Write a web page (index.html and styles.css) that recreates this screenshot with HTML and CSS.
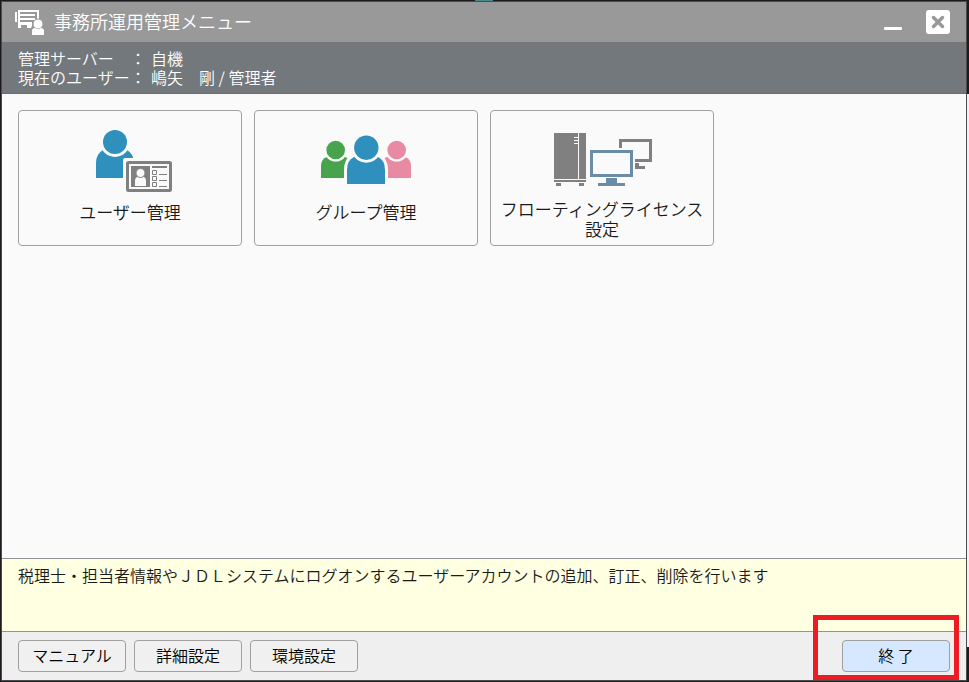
FILE: index.html
```html
<!DOCTYPE html>
<html lang="ja">
<head>
<meta charset="utf-8">
<title>事務所運用管理メニュー</title>
<link rel="stylesheet" href="styles.css">
</head>
<body>
<div class="window">
  <header class="titlebar">
    <svg class="app-icon" viewBox="0 0 30 26" aria-hidden="true">
      <path fill="#fff" d="M0 3h2v10H0zM3 1h21v9h-2V3H5v2h15v2H5v2h15v2H5v2h12v4l-1 2h-4v-3H6v3H3z"/>
      <circle cx="23" cy="15" r="5" fill="#fff" stroke="#999"/>
      <path fill="#fff" d="M17 26v-5q1-2 3-2 3 2 6 0 2 0 3 2v5z"/>
    </svg>
    <h1 class="title">事務所運用管理メニュー</h1>
    <button class="win-button" type="button" aria-label="最小化">
      <svg viewBox="0 0 24 24"><rect x="3" y="17" width="18" height="3" rx="1" fill="#fff"/></svg>
    </button>
    <button class="win-button" type="button" aria-label="閉じる">
      <svg viewBox="0 0 24 24"><rect width="24" height="24" rx="3" fill="#fff"/><path d="M7.500 7.500l9 9M16.500 7.500l-9 9" stroke="#999" stroke-width="3.500" stroke-linecap="round"/></svg>
    </button>
  </header>
  <dl class="session">
    <dt>管理サーバー</dt><dd>自機</dd>
    <dt>現在のユーザー</dt><dd>嶋矢　剛 / 管理者</dd>
  </dl>
  <main class="menu">
    <button class="card" type="button">
      <svg class="card-icon" viewBox="0 0 120 88" aria-hidden="true">
        <path fill="#2f90bd" d="M26 67V52q0-9 7-13h24q7 4 7 13v15z"/>
        <circle cx="45" cy="31" r="15" fill="#fafafa"/>
        <circle cx="45" cy="31" r="12" fill="#2f90bd"/>
        <path fill="#fafafa" d="M53 84V49q0-2 2-2h50v37z"/>
        <rect x="57.500" y="51.500" width="43" height="28" rx="1" fill="#fafafa" stroke="#808080" stroke-width="3"/>
        <path fill="#808080" d="M61 55h19v21H61zM82 55h15v2H82z"/>
        <path fill="#fafafa" d="M65 75v-5q0-4 3-4h5q3 0 3 4v5z"/>
        <circle cx="70.500" cy="62" r="4.500" fill="#fafafa" stroke="#808080"/>
        <path fill="none" stroke="#808080" d="M82.500 59.500h4v4h-4zM82.500 65.500h4v4h-4zM82.500 71.500h4v4h-4zM89 63.500h8M89 69.500h8M89 75.500h8"/>
      </svg>
      <span class="card-label">ユーザー管理</span>
    </button>
    <button class="card" type="button">
      <svg class="card-icon" viewBox="0 0 120 88" aria-hidden="true">
        <path fill="#48a44c" d="M15 67V55q0-7 6-9h18q6 2 6 9v12z"/>
        <circle cx="29.700" cy="39" r="11.500" fill="#fafafa"/>
        <circle cx="29.700" cy="39" r="9.300" fill="#48a44c"/>
        <path fill="#e88ba2" d="M75 67V55q0-7 6-9h18q6 2 6 9v12z"/>
        <circle cx="90.700" cy="39" r="11.500" fill="#fafafa"/>
        <circle cx="90.700" cy="39" r="9.300" fill="#e88ba2"/>
        <path fill="#2f90bd" stroke="#fafafa" stroke-width="6" paint-order="stroke" d="M41 73V59q0-10 7-13h24q7 3 7 13v14z"/>
        <circle cx="60.300" cy="36.700" r="15" fill="#fafafa"/>
        <circle cx="60.300" cy="36.700" r="12.200" fill="#2f90bd"/>
      </svg>
      <span class="card-label">グループ管理</span>
    </button>
    <button class="card" type="button">
      <svg class="card-icon" viewBox="0 0 120 88" aria-hidden="true">
        <path fill="#808080" d="M12 22h24v4h-4v1h4v2h-4v1h4v2h-4v1h4v35H12zM37 22h7v46h-7zM12 69h32v2H12zM14 72h5v3h-5zM37 72h5v3h-5z"/>
        <path fill="#808080" d="M77 28h33v23H93v-3h14V31H80v6h-3zM93 52h4v3h6v3H93z"/>
        <path fill="#698da8" fill-rule="evenodd" d="M48 39h43v27H48zM51 42v21h37V42zM64 67h11v5h8v3H56v-3h8z"/>
      </svg>
      <span class="card-label">フローティングライセンス設定</span>
    </button>
  </main>
  <p class="notice">税理士・担当者情報やＪＤＬシステムにログオンするユーザーアカウントの追加、訂正、削除を行います</p>
  <footer class="actions">
    <button class="action" type="button">マニュアル</button>
    <button class="action" type="button">詳細設定</button>
    <button class="action" type="button">環境設定</button>
    <div class="exit">
      <button class="action action-exit" type="button">終 了</button>
      <span class="highlight"></span>
    </div>
  </footer>
</div>
</body>
</html>
```
FILE: styles.css
```css
* {
  box-sizing: border-box;
}

body {
  margin: 0;
  min-height: 100vh;
  display: flex;
  padding: 1px 2px 1px 1px;
  font: 350 16px/19px "Noto Sans CJK JP", sans-serif;
  color: #1a1a1a;
  background:
    linear-gradient(#4a8a8c, #4a8a8c) 475px 0 / 18px 1px no-repeat,
    linear-gradient(#1c1c1c 94px, #f0f0f6 94px, #f0f0f6 647px, #1c1c1c 647px) right / 2px 100% no-repeat,
    #1c1a1d;
}

button {
  font: inherit;
  color: inherit;
  padding: 0;
}

.window {
  flex: 1;
  display: flex;
  flex-direction: column;
  border: 1px solid #4c4c4c;
  background: #fafafa;
}

.titlebar {
  display: flex;
  align-items: center;
  height: 40px;
  padding: 0 16px 0 13px;
  background: #999;
  color: #fff;
}

.app-icon {
  width: 30px;
  height: 26px;
}

.title {
  flex: 1;
  margin: 0 0 0 9px;
  padding-bottom: 2px;
  font-size: 18px;
  font-weight: inherit;
  line-height: 24px;
}

.win-button {
  width: 24px;
  height: 24px;
  margin-left: 21px;
  border: 0;
  background: none;
}

.win-button svg {
  display: block;
}

.session {
  display: grid;
  grid-template-columns: 133px 1fr;
  margin: 0;
  padding: 7px 16px 6px;
  border-bottom: 1px solid #686d70;
  background: #73787c;
  color: #fff;
}

.session dt {
  display: flex;
  justify-content: space-between;
  padding-right: 5px;
}

.session dt::after {
  content: "：";
}

.session dd {
  margin: 0;
}

.menu {
  flex: 1;
  display: flex;
  flex-wrap: wrap;
  align-content: flex-start;
  gap: 12px;
  padding: 16px;
}

.card {
  display: flex;
  flex-direction: column;
  align-items: center;
  width: 224px;
  height: 136px;
  border: 1px solid #a0a0a0;
  border-radius: 4px;
  background: #fafafa;
  font-size: 17px;
  line-height: 20px;
}

.card-icon {
  width: 120px;
  height: 88px;
  flex: none;
}

.card-label {
  display: flex;
  align-items: center;
  min-height: 26px;
  max-width: 208px;
}

.notice {
  min-height: 73px;
  margin: 0;
  padding: 7px 16px;
  border-top: 1px solid #909498;
  background: #ffffe1;
}

.actions {
  display: flex;
  gap: 8px;
  padding: 8px 16px;
  border-top: 1px solid #909498;
  background: #efefef;
}

.action {
  width: 108px;
  height: 32px;
  padding-bottom: 2px;
  border: 1px solid #a0a0a0;
  border-radius: 4px;
  background: #f0f0f0;
  color: #000;
}

.exit {
  position: relative;
  margin-left: auto;
}

.action-exit {
  display: block;
  background: #d5e8ff;
}

.highlight {
  position: absolute;
  inset: -25px -9px -8px -29px;
  border: 5px solid #ed1c24;
  pointer-events: none;
}
```
